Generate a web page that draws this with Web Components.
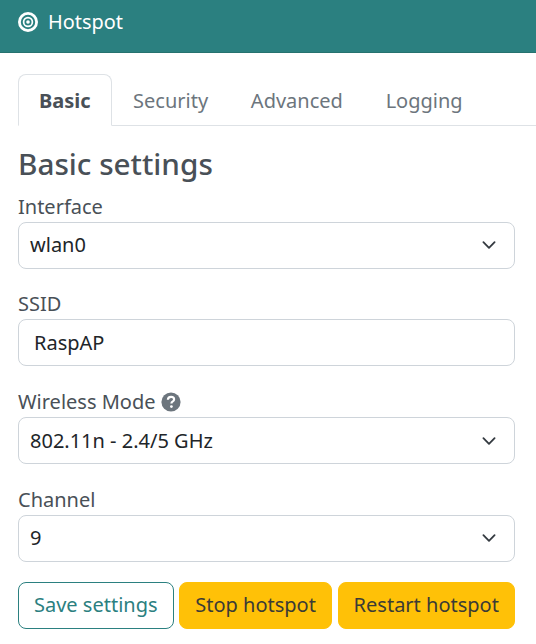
<!DOCTYPE html>
<html>
<head>
<meta charset="utf-8">
<title>Hotspot</title>
<style>
  html, body { margin: 0; padding: 0; background: #fff; }
  body { font-family: "Noto Sans", sans-serif; font-size: 20px; line-height: 30px; color: #212529; }
</style>
</head>
<body>
<ra-page>
  <ra-header slot="header">Hotspot</ra-header>
  <ra-tabs>
    <ra-tab active>Basic</ra-tab>
    <ra-tab>Security</ra-tab>
    <ra-tab>Advanced</ra-tab>
    <ra-tab>Logging</ra-tab>
  </ra-tabs>
  <h4-title>Basic settings</h4-title>
  <ra-field label="Interface" type="select" value="wlan0"></ra-field>
  <ra-field label="SSID" type="text" value="RaspAP"></ra-field>
  <ra-field label="Wireless Mode" type="select" value="802.11n - 2.4/5 GHz" help></ra-field>
  <ra-field label="Channel" type="select" value="9"></ra-field>
  <ra-actions>
    <ra-button kind="outline">Save settings</ra-button>
    <ra-button kind="warning">Stop hotspot</ra-button>
    <ra-button kind="warning">Restart hotspot</ra-button>
  </ra-actions>
</ra-page>
<script>
class Page extends HTMLElement {
    constructor() {
        super();
        this.attachShadow({ mode: 'open' }).innerHTML = `
        <style>
          :host { display: block; }
          .body { padding: 21px 21px 0 18px; }
        </style>
        <slot name="header"></slot>
        <div class="body"><slot></slot></div>`;
    }
}

class Header extends HTMLElement {
    constructor() {
        super();
        this.attachShadow({ mode: 'open' }).innerHTML = `
        <style>
          :host { display: flex; align-items: center; gap: 10px; box-sizing: border-box; height: 53px;
                  padding: 0 0 8px 18px; background: #2b8080; border-bottom: 1px solid #26726f;
                  color: #fff; font-size: 19.9px; }
          svg { display: block; }
        </style>
        <svg width="20" height="20" viewBox="0 0 20 20" fill="none" stroke="#fff">
          <circle cx="10" cy="10" r="8.6" stroke-width="2.8"/>
          <circle cx="10" cy="10" r="4.4" stroke-width="1.7"/>
          <circle cx="10" cy="10" r="1.8" fill="#fff" stroke="none"/>
        </svg>
        <slot></slot>`;
    }
}

class Tabs extends HTMLElement {
    constructor() {
        super();
        this.attachShadow({ mode: 'open' }).innerHTML = `
        <style>
          :host { display: flex; height: 52px; box-sizing: border-box; border-bottom: 1px solid #dee2e6;
                  margin-right: -21px; }
        </style>
        <slot></slot>`;
    }
}

class Tab extends HTMLElement {
    constructor() {
        super();
        this.attachShadow({ mode: 'open' }).innerHTML = `
        <style>
          :host { display: block; box-sizing: border-box; height: 52px; padding: 11px 20.4px; color: #6c757d;
                  border: 1px solid transparent; border-radius: 8px 8px 0 0; }
          :host([active]) { color: #495057; font-weight: 700; background: #fff; padding: 11px 20px;
                  border-color: #dee2e6 #dee2e6 #fff; }
        </style>
        <slot></slot>`;
    }
}

class Title extends HTMLElement {
    constructor() {
        super();
        this.attachShadow({ mode: 'open' }).innerHTML = `
        <style>
          :host { display: block; margin: 20px 0 9.7px; font-size: 29.7px; line-height: 36px; font-weight: 500; color: #495057; }
        </style>
        <slot></slot>`;
    }
}

class Field extends HTMLElement {
    constructor() {
        super();
        const label = this.getAttribute('label');
        const value = this.getAttribute('value');
        const isSelect = this.getAttribute('type') === 'select';
        const help = this.hasAttribute('help') ? `
          <svg class="help" width="20" height="20" viewBox="0 0 20 20">
            <circle cx="10" cy="10" r="9.6" fill="#6c757d"/>
            <path d="M6.9 7.8q.1-2.9 3.2-2.9 3 0 3 2.4 0 1.3-1.3 2.1-1.4.8-1.4 2.1" fill="none" stroke="#fff" stroke-width="2.2"/>
            <circle cx="10.4" cy="14.6" r="1.4" fill="#fff"/>
          </svg>` : '';
        const chevron = isSelect ? `
          <svg class="chevron" width="16" height="16" viewBox="0 0 16 16">
            <path d="M2.4 5.2l5.6 5.6 5.6-5.6" fill="none" stroke="#343a40" stroke-width="1.8" stroke-linecap="round" stroke-linejoin="round"/>
          </svg>` : '';
        this.attachShadow({ mode: 'open' }).innerHTML = `
        <style>
          :host { display: block; margin-bottom: 20.67px; }
          .label { display: flex; align-items: center; gap: 5px; height: 30px; color: #495057; margin-bottom: 0; }
          .box { display: flex; align-items: center; justify-content: space-between; box-sizing: border-box;
                 height: 47px; background: #fff; border: 1px solid #ced4da; border-radius: 8px;
                 padding: 0 17px 0 ${isSelect ? 11 : 15}px; color: #212529; }
          .chevron { display: block; }
        </style>
        <div class="label"><span>${label}</span>${help}</div>
        <div class="box"><span>${value}</span>${chevron}</div>`;
    }
}

class Actions extends HTMLElement {
    constructor() {
        super();
        this.attachShadow({ mode: 'open' }).innerHTML = `
        <style>
          :host { display: flex; gap: 5.7px; }
        </style>
        <slot></slot>`;
    }
}

class Button extends HTMLElement {
    constructor() {
        super();
        this.attachShadow({ mode: 'open' }).innerHTML = `
        <style>
          :host { display: block; box-sizing: border-box; height: 47px; padding: 7px 15px;
                  border: 1px solid transparent; border-radius: 8px; white-space: nowrap; }
          :host([kind=outline]) { color: #2b8080; border-color: #2b8080; background: #fff; }
          :host([kind=warning]) { color: #3b3b36; background: #ffc107; border-color: #ffc107; }
        </style>
        <slot></slot>`;
    }
}

window.customElements.define('ra-page', Page);
window.customElements.define('ra-header', Header);
window.customElements.define('ra-tabs', Tabs);
window.customElements.define('ra-tab', Tab);
window.customElements.define('h4-title', Title);
window.customElements.define('ra-field', Field);
window.customElements.define('ra-actions', Actions);
window.customElements.define('ra-button', Button);
</script>
</body>
</html>
